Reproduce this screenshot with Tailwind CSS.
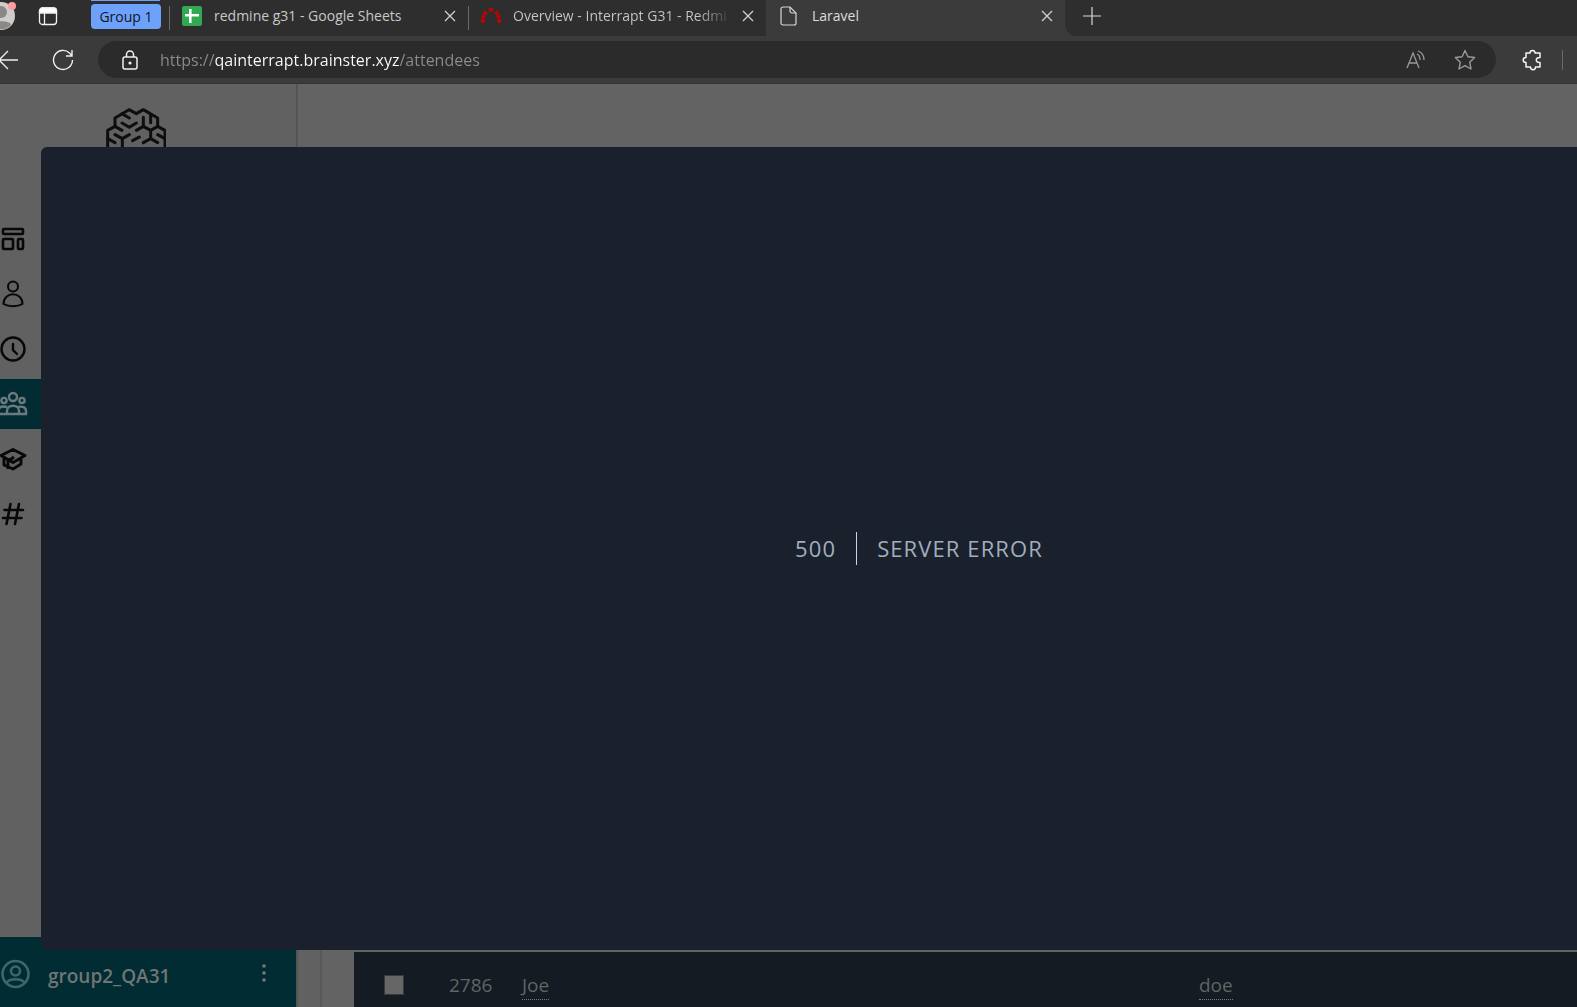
<!DOCTYPE html>
<html lang="en">
  <head>
    <meta charset="utf-8" />
    <title>Laravel</title>
    <meta name="viewport" content="width=device-width, initial-scale=1" />
    <script src="https://cdn.jsdelivr.net/npm/@tailwindcss/browser@4"></script>
  </head>
  <body class="font-['Open_Sans',sans-serif]">
    <div class="flex h-screen flex-col overflow-hidden bg-[#3b3b3b]">
      <!-- Tab strip -->
      <header class="flex h-9 shrink-0 items-start bg-[#2e2e2e] text-[14px] text-[#c8c8c8]">
        <div class="flex h-8 w-[91px] shrink-0 items-center">
          <button type="button" aria-label="Profile" class="w-[38px]">
            <svg class="h-8 w-5" viewBox="0 0 20 32">
              <circle cx="1" cy="16" r="14" fill="#cfcdcb" />
              <circle cx="1" cy="12" r="6" fill="#8a8785" />
              <path d="M-9 25c0-5 20-5 20 0a14 14 0 0 1-20 0z" fill="#8a8785" />
              <circle cx="12" cy="6" r="4" fill="#ff9c9c" />
            </svg>
          </button>
          <button type="button" aria-label="Workspaces">
            <svg class="h-5 w-5" viewBox="0 0 20 20" fill="none" stroke="#f2f2f2" stroke-width="1.3">
              <rect x="1.500" y="2" width="17" height="16.500" rx="3" />
              <path d="M1.500 7V5a3 3 0 0 1 3-3h11a3 3 0 0 1 3 3v2z" fill="#fff" />
              <path d="M6.500 7v11" />
            </svg>
          </button>
        </div>
        <div class="flex h-8 w-[78px] shrink-0 flex-col">
          <span class="mb-[3px] h-px w-[69px] bg-[#6ea2fa]"></span>
          <button type="button" class="h-[25px] w-[70px] rounded bg-[#6ea2fa] text-[14px] leading-[23px] text-[#10151f]">Group 1</button>
        </div>
        <div class="flex h-8 w-[299px] shrink-0 items-center pr-3">
          <span class="mt-1 mr-3 h-6 w-px bg-[#6a6a6a]"></span>
          <svg class="h-5 w-5 shrink-0" viewBox="0 0 20 20">
            <rect width="20" height="20" rx="2" fill="#33a853" />
            <path d="M7 3h2.600v5H17v2.500H9.600V17H7v-6.500H3V8h4z" fill="#fff" />
          </svg>
          <span class="ml-3 flex-1 truncate pb-px">redmine g31 - Google Sheets</span>
          <button type="button" aria-label="Close tab">
            <svg class="h-3 w-3" viewBox="0 0 12 12" stroke="#d0d0d0" stroke-width="1.3"><path d="M1 1l10 10M11 1L1 11" /></svg>
          </button>
        </div>
        <div class="flex h-8 w-[298px] shrink-0 items-center pr-3">
          <span class="mt-1 mr-3 h-6 w-px bg-[#6a6a6a]"></span>
          <svg class="h-5 w-5 shrink-0" viewBox="0 0 20 20" fill="#c40000">
            <path d="M0 13h4l-1 4H0zM1 8.500l4 1-1.500 3-3-.5zM4 4.500l3 2.500-2 2-3.500-1.500zM7.500 2h5l-1 3.500h-3zM16 4.500L13 7l2 2 3.500-1.500zM19 8.500l-4 1 1.500 3 3-.5zM20 13h-4l1 4h3z" />
          </svg>
          <span class="mr-3 ml-3 flex-1 bg-linear-to-r from-[#c8c8c8] from-85% to-[#3a3a3a] bg-clip-text pb-px whitespace-nowrap text-transparent">Overview - Interrapt G31 - Redmi</span>
          <button type="button" aria-label="Close tab">
            <svg class="h-3 w-3" viewBox="0 0 12 12" stroke="#d0d0d0" stroke-width="1.3"><path d="M1 1l10 10M11 1L1 11" /></svg>
          </button>
        </div>
        <div class="flex h-9 w-[299px] shrink-0 items-start bg-[#3b3b3b]">
          <div class="h-9 w-3 shrink-0 bg-[#3b3b3b]"></div>
          <div class="flex h-8 w-full items-center pr-3 pl-[2px]">
            <svg class="h-5 w-[18px] shrink-0" viewBox="0 0 18 20" fill="none" stroke="#d6d6d6" stroke-width="1.2">
              <path d="M3 1h7l6 6v10a2 2 0 0 1-2 2H3a2 2 0 0 1-2-2V3a2 2 0 0 1 2-2z" />
              <path d="M10 1v4a2 2 0 0 0 2 2h4" />
            </svg>
            <span class="ml-[14px] flex-1 pb-px text-[#dcdcdc]">Laravel</span>
            <button type="button" aria-label="Close tab">
              <svg class="h-3 w-3" viewBox="0 0 12 12" stroke="#d0d0d0" stroke-width="1.3"><path d="M1 1l10 10M11 1L1 11" /></svg>
            </button>
          </div>
        </div>
        <div class="h-9 flex-1 bg-[#3b3b3b]">
          <div class="flex h-9 items-start rounded-bl-xl bg-[#2e2e2e] pt-[7px] pl-[18px]">
            <button type="button" aria-label="New tab">
              <svg class="h-[18px] w-[18px]" viewBox="0 0 18 18" stroke="#d8d8d8" stroke-width="1.2"><path d="M9 0v18M0 9h18" /></svg>
            </button>
          </div>
        </div>
      </header>

      <!-- Toolbar -->
      <nav class="flex h-12 shrink-0 items-center border-b border-[#333] bg-[#3b3b3b]">
        <button type="button" aria-label="Back" class="w-[52px]">
          <svg class="h-5 w-5" viewBox="0 0 20 20" fill="none" stroke="#f0f0f0" stroke-width="1.3"><path d="M18 10H-1M8 1L-1 10l9 9" /></svg>
        </button>
        <button type="button" aria-label="Refresh" class="w-[46px]">
          <svg class="h-[22px] w-[22px]" viewBox="0 0 22 22" fill="none" stroke="#f0f0f0" stroke-width="1.4">
            <path d="M20.500 11A9.500 9.500 0 1 1 17.500 4l2.500 2.500M20 1v6h-6" />
          </svg>
        </button>
        <div class="flex h-[37px] flex-1 items-center rounded-full bg-[#2b2b2b] pr-5 pl-6">
          <svg class="h-5 w-4 shrink-0" viewBox="0 0 16 20" fill="none" stroke="#f0f0f0" stroke-width="1.5">
            <rect x="1" y="7" width="14" height="12" rx="2" />
            <path d="M4.500 7V4.500a3.500 3.500 0 0 1 7 0V7" />
            <circle cx="8" cy="13" r=".8" fill="#fff" />
          </svg>
          <input
            type="text"
            aria-label="Address"
            value="https://qainterrapt.brainster.xyz/attendees"
            class="ml-[22px] min-w-0 flex-1 bg-[linear-gradient(90deg,#8c8c8c_55px,#fff_55px,#fff_239px,#8c8c8c_239px)] bg-clip-text text-[16px] text-transparent outline-none"
          />
          <button type="button" aria-label="Read aloud">
            <svg class="h-5 w-5" viewBox="0 0 20 20" fill="none" stroke="#999" stroke-width="1.3">
              <path d="M1 18L7 3l6 15M3 13h8M11 4c2 1 3 3 3 6M12 1c4 1.500 6 4.500 6 9" />
            </svg>
          </button>
          <button type="button" aria-label="Add to favorites" class="ml-[28px]">
            <svg class="h-[22px] w-[22px]" viewBox="0 0 22 22" fill="none" stroke="#999" stroke-width="1.400" stroke-linejoin="round">
              <path d="M11 1.500l2.900 6.200 6.800.8-5 4.700 1.300 6.800-6-3.300L5 20l1.300-6.800-5-4.700 6.800-.8z" />
            </svg>
          </button>
        </div>
        <button type="button" aria-label="Extensions" class="ml-[26px]">
          <svg class="h-[22px] w-5" viewBox="0 0 20 22" fill="none" stroke="#f5f5f5" stroke-width="1.500" stroke-linejoin="round">
            <path d="M4 4h4c0-3.500 5-3.500 5 0h5v4.500c-5-.5-5 5.500 0 5V18h-4.500c0 3.500-5 3.500-5 0H4v-4.500c-3.700 0-3.700-5 0-5z" />
          </svg>
        </button>
        <span class="mr-[14px] ml-[20px] h-5 w-px bg-[#6a6a6a]"></span>
      </nav>

      <!-- Page under the dimmed backdrop -->
      <div class="relative flex min-h-0 flex-1 overflow-hidden bg-[#636363]">
        <aside class="flex w-[298px] shrink-0 flex-col border-r-2 border-[#545454] bg-[#616161]">
          <div class="h-[130px] pt-6 pl-[106px]">
            <svg class="h-10 w-[60px]" viewBox="48 40 180 120" fill="none" stroke="#0e0e0e" stroke-width="9" stroke-linejoin="round" stroke-linecap="round">
              <path d="M53 160V107l22-12V70l42-25 22 12 21-12 43 25v25l22 12v53" />
              <path d="M96 57l22 13M96 85l22 13 21-13M160 68v27l-21 12M160 95l22 12 21-12M182 107v25l21 12M182 132l-22 12M182 62v22M203 120l22 12M75 95l21 12M75 120l22 12 21-12M97 132v28M53 132l22 12M128 138l20-11" />
            </svg>
          </div>
          <ul class="flex flex-1 flex-col gap-[5px]">
            <li>
              <a href="#" aria-label="Dashboard" class="flex h-[50px] items-center">
                <svg class="h-7 w-7" viewBox="0 0 28 28" fill="none" stroke="#080808" stroke-width="2.600">
                  <rect x="3" y="4" width="20" height="5" rx="1" />
                  <rect x="3" y="14" width="10" height="10" rx="1" />
                  <rect x="18" y="14" width="5" height="10" rx="1" />
                </svg>
              </a>
            </li>
            <li>
              <a href="#" aria-label="Profile" class="flex h-[50px] items-center">
                <svg class="h-7 w-7" viewBox="0 0 28 28" fill="none" stroke="#080808" stroke-width="2" stroke-linejoin="round">
                  <circle cx="13" cy="6.500" r="5" />
                  <path d="M3.500 24c0-13 19-13 19 0-5 3-14 3-19 0z" />
                </svg>
              </a>
            </li>
            <li>
              <a href="#" aria-label="Schedule" class="flex h-[50px] items-center">
                <svg class="h-7 w-7" viewBox="0 0 28 28" fill="none" stroke="#080808" stroke-width="2.400" stroke-linecap="round">
                  <circle cx="13" cy="14" r="11.500" />
                  <path d="M13 9v6l4 4" />
                </svg>
              </a>
            </li>
            <li>
              <a href="#" aria-label="Attendees" class="flex h-[50px] items-center bg-[#022c33]">
                <svg class="h-7 w-7" viewBox="0 0 28 28" fill="none" stroke="#6b7b7d" stroke-width="2.400">
                  <circle cx="13" cy="7" r="4" />
                  <circle cx="4" cy="10.500" r="2.600" />
                  <circle cx="22" cy="10.500" r="2.600" />
                  <path d="M7 24v-3c0-7 12-7 12 0v3zM7 24H-2v-3c1-5 5-5 9-4M19 24h7v-3c0-4-4-5-8-4" />
                </svg>
              </a>
            </li>
            <li>
              <a href="#" aria-label="Academies" class="flex h-[50px] items-center">
                <svg class="h-7 w-7" viewBox="0 0 28 28" fill="none" stroke="#080808" stroke-width="2.900" stroke-linejoin="round">
                  <path d="M1 10.500l12-6 12 6-12 7zM4 12v8l9 4 8-5v-7M8 24v-8l6-4" />
                </svg>
              </a>
            </li>
            <li>
              <a href="#" aria-label="Tags" class="flex h-[50px] items-center">
                <svg class="h-7 w-7" viewBox="0 0 28 28" fill="none" stroke="#080808" stroke-width="2.600" stroke-linecap="round">
                  <path d="M10.500 4l-4 20M19 4l-4 20M4.500 10H23M3 18h18.500" />
                </svg>
              </a>
            </li>
          </ul>
          <div class="flex h-[70px] items-center bg-[#022c33] pt-1 pr-[26px]">
            <svg class="h-[30px] w-[30px]" viewBox="0 0 30 30" fill="none" stroke="#3c686c" stroke-width="2.600">
              <circle cx="15.500" cy="15" r="13" />
              <circle cx="15.500" cy="12" r="4.500" />
              <path d="M6 24c4-5 15-5 19 0" />
            </svg>
            <span class="ml-[18px] flex-1 pt-1 text-[19px] font-semibold text-[#707575]">group2_QA31</span>
            <button type="button" aria-label="Account menu">
              <svg class="h-5 w-3" viewBox="0 0 12 20" fill="#777b7c">
                <circle cx="6" cy="2" r="1.800" />
                <circle cx="6" cy="9" r="1.800" />
                <circle cx="6" cy="16" r="1.800" />
              </svg>
            </button>
          </div>
        </aside>

        <main class="flex min-w-0 flex-1 flex-col">
          <div class="h-20 shrink-0"></div>
          <div class="flex min-h-0 flex-1">
            <div class="w-6 shrink-0 border-r-2 border-[#585858] bg-[#616161]"></div>
            <div class="flex min-w-0 flex-1 flex-col justify-end pl-8">
              <table class="w-full table-fixed text-left text-[19px] text-[#626466]">
                <colgroup>
                  <col class="w-[95px]" />
                  <col class="w-[73px]" />
                  <col class="w-[677px]" />
                  <col />
                </colgroup>
                <tbody>
                  <tr class="h-14 border-t border-[#636363] bg-[#141b22]">
                    <td class="pt-3 pl-[30px]">
                      <input type="checkbox" aria-label="Select 2786" class="block h-5 w-5 appearance-none border border-[#343a40] bg-[#666]" />
                    </td>
                    <td class="pt-3">2786</td>
                    <td class="pt-3">
                      <a href="#" class="inline-block border-b border-dotted border-[#777]">Joe</a>
                    </td>
                    <td class="pt-3">
                      <a href="#" class="inline-block border-b border-dotted border-[#777]">doe</a>
                    </td>
                  </tr>
                </tbody>
              </table>
            </div>
          </div>
        </main>

        <!-- Error dialog, wider than the viewport -->
        <div role="dialog" aria-label="Server error" class="absolute top-[63px] -right-[200px] bottom-[57px] left-[41px] flex items-center justify-center rounded-md bg-[#1a202c] text-[22px] tracking-wider text-[#a0aec0]">
          <div class="border-r border-[#cbd5e0] px-5">500</div>
          <div class="ml-5 uppercase">Server Error</div>
        </div>
      </div>
    </div>
  </body>
</html>
